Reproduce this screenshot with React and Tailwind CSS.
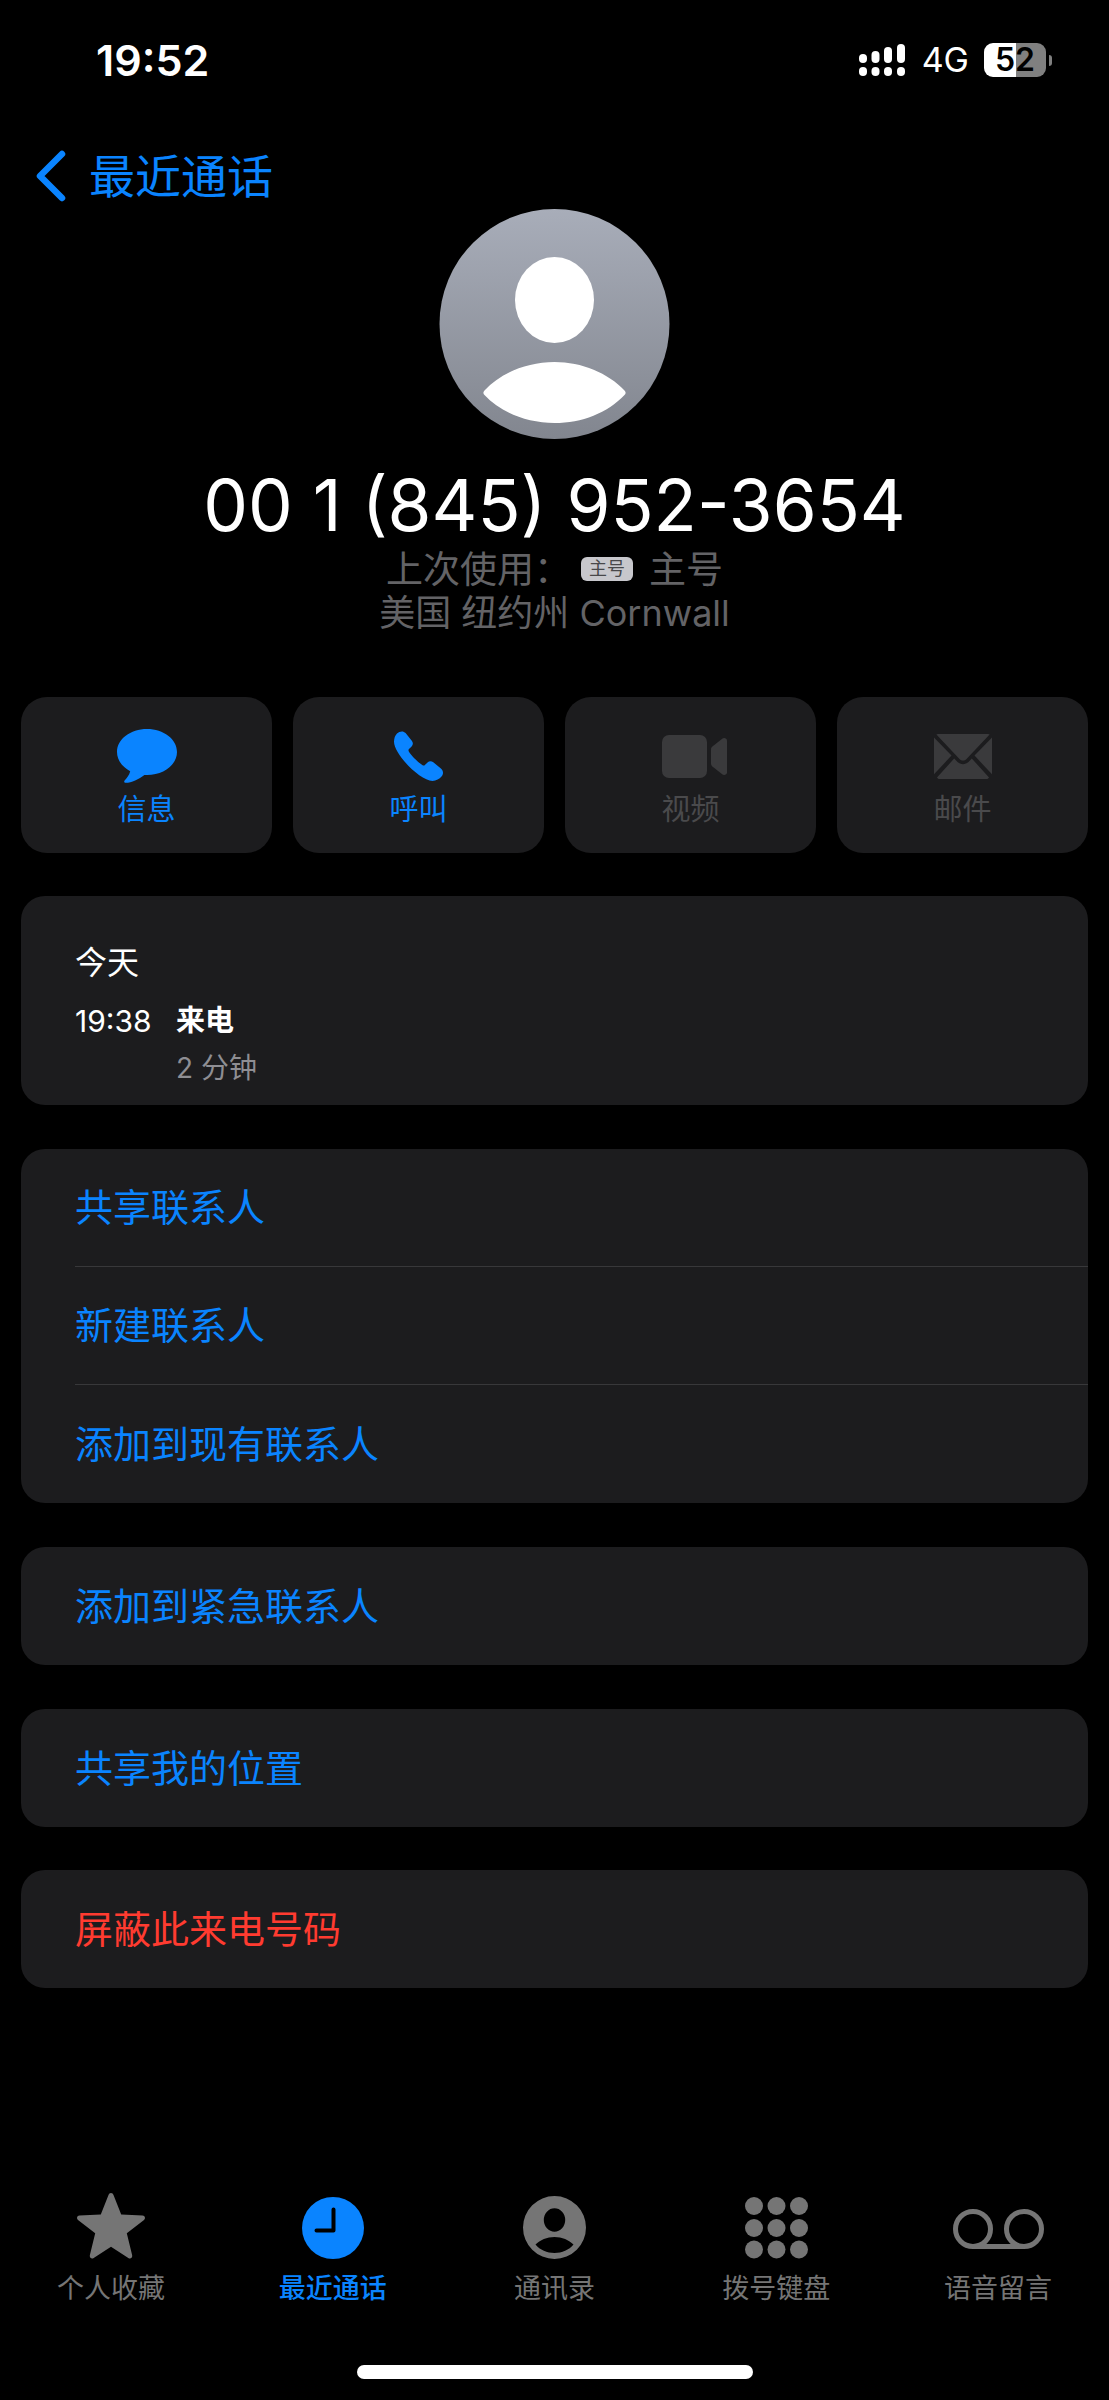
const font = { fontFamily: 'Inter, "Noto Sans CJK SC", sans-serif' };

function Bubble() {
  return (
    <svg width="60" height="54" viewBox="0 0 60 54" fill="#0a84ff">
      <path d="M30 0C13.400 0 0 10.200 0 23c0 8 5.200 15 13.200 19.200-.9 3.600-3.200 7-5.600 9.200-.9.900-.3 2.500 1.200 2.400 5.600-.4 13.200-3.400 18.600-7.900 1 .1 1.600.1 2.600.1 16.600 0 30-10.200 30-23S46.600 0 30 0z" />
    </svg>
  );
}

function Phone() {
  return (
    <svg width="50" height="50" viewBox="0 0 50 50" fill="#0a84ff">
      <path d="M3 2.500C5.500.200 9.300-.500 11.600 2.100l6.200 7.600c1.500 1.900 1.400 4.100-.2 5.800l-2.600 2.600c-.6.600-.7 1.500-.2 2.300 2.500 4 9.300 11 13.800 13.800.8.500 1.700.4 2.300-.2l2.600-2.600c1.700-1.600 3.900-1.700 5.800-.2l7.600 6.200c2.600 2.300 2.800 5.500.6 8.200-2 2.500-5.300 4.300-9 4.300C26 49.900 0 23 0 10.800 0 7.500 1 4.400 3 2.500z" />
    </svg>
  );
}

function Video() {
  return (
    <svg className="ml-[7px]" width="65" height="43" viewBox="0 0 65 43" fill="#3a3a3c">
      <rect x="0" y="0" width="45" height="43" rx="7" />
      <path d="M49 14.500c0-1.200.4-2 1.400-2.900l9.800-7.900c1.700-1.300 4.800-.5 4.800 2v31.600c0 2.500-3.100 3.300-4.800 2l-9.800-7.900c-1-.9-1.400-1.700-1.400-2.900z" />
    </svg>
  );
}

function Mail() {
  return (
    <svg width="58" height="45" viewBox="0 0 58 45" fill="#3a3a3c">
      <path d="M4 0h50c.8 0 1.300.2 1.600.5L32.500 25c-2 2-5 2-7 0L2.400.5C2.700.2 3.200 0 4 0z" />
      <path d="M0 3.500v36.800L17.500 21.600z" />
      <path d="M58 3.500v36.800L40.500 21.600z" />
      <path d="M3 43.500 20.200 24.500l3.300 3.400c3 3 8 3 11 0l3.300-3.400L55 43.500c-.4.900-1.200 1.500-2.500 1.500h-47c-1.300 0-2.100-.6-2.500-1.500z" />
    </svg>
  );
}

function Star() {
  return (
    <svg width="68" height="66" viewBox="0 0 68 66" fill="#757575">
      <path d="M34 0c1.300 0 2 .8 2.600 2.200l7.600 19.300 21.300 1.100c2.500.2 3.300 2.700 1.500 4.300L49.800 40.300l5.300 21.800c.6 2.600-1.600 4.200-3.800 2.800L34 53.800 16.700 64.900c-2.200 1.400-4.400-.2-3.800-2.800l5.300-21.800L1 26.900c-1.800-1.600-1-4.100 1.500-4.300l21.300-1.100 7.600-19.300C32 .8 32.700 0 34 0z" />
    </svg>
  );
}

function Clock() {
  return (
    <svg width="62" height="62" viewBox="0 0 62 62">
      <circle cx="31" cy="31" r="31" fill="#0a84ff" />
      <path d="M31.500 12.500V33.500H14.500" fill="none" stroke="#000" strokeWidth="4" strokeLinecap="round" strokeLinejoin="round" />
    </svg>
  );
}

function Contact() {
  return (
    <svg width="63" height="63" viewBox="0 0 63 63" fill="#757575">
      <path fillRule="evenodd" d="M31.500 0a31.500 31.500 0 1 1 0 63 31.500 31.500 0 0 1 0-63zM31.500 12.300a10.700 11.700 0 1 0 0 23.400 10.700 11.700 0 0 0 0-23.400zM31.500 41c-7.500 0-14.500 3-19 7.500 4.500 5.500 11.500 8.500 19 8.500s14.500-3 19-8.500c-4.500-4.500-11.500-7.500-19-7.500z" />
    </svg>
  );
}

function Keypad() {
  const dots = [9, 31.5, 54];
  const rows = [9, 31, 52.5];
  return (
    <svg width="63" height="62" viewBox="0 0 63 62" fill="#757575">
      {rows.map((y) => dots.map((x) => <circle key={`${x}-${y}`} cx={x} cy={y} r="9" />))}
    </svg>
  );
}

function Voicemail() {
  return (
    <svg className="mb-[10px]" width="91" height="40" viewBox="0 0 91 40" fill="none" stroke="#757575" strokeWidth="5">
      <circle cx="20" cy="20" r="17.500" />
      <circle cx="71" cy="20" r="17.500" />
      <path d="M20 37.500h51" />
    </svg>
  );
}

function ActionButton({ icon, label, active }) {
  return (
    <div className="flex h-[156px] flex-col items-center rounded-[26px] bg-[#1c1c1e]">
      <div className="mt-[28px] flex h-[62px] items-center justify-center">{icon}</div>
      <span className={`mt-[4px] text-[29px] leading-[38px] ${active ? 'text-[#0a84ff]' : 'text-[#4a4a4c]'}`}>{label}</span>
    </div>
  );
}

function Row({ children, red, divider }) {
  return (
    <div className="pl-[54px]">
      <div className={`flex h-[118px] items-center text-[38px] ${red ? 'text-[#ff3b30]' : 'text-[#0a84ff]'} ${divider ? 'border-b border-[#38383a]' : ''}`}>
        {children}
      </div>
    </div>
  );
}

function Card({ children, className = '' }) {
  return <div className={`mx-[21px] overflow-hidden rounded-[24px] bg-[#1c1c1e] ${className}`}>{children}</div>;
}

function Tab({ icon, label, active }) {
  return (
    <div className="flex flex-col items-center">
      <div className="flex h-[66px] items-end">{icon}</div>
      <span className={`mt-[12px] text-[27px] leading-[36px] ${active ? 'font-medium text-[#0a84ff]' : 'text-[#757575]'}`}>{label}</span>
    </div>
  );
}

export default function App() {
  return (
    <div className="flex h-[2400px] w-[1109px] flex-col bg-black text-white" style={font}>
      {/* Status bar */}
      <div className="flex h-[120px] items-center justify-between pl-[96px] pr-[57px]">
        <span className="text-[43px] font-semibold leading-none">19:52</span>
        <div className="flex items-center">
          <svg width="46" height="32" viewBox="0 0 46 32" fill="#fff">
            <rect x="0" y="10" width="8" height="9" rx="4" />
            <rect x="12.500" y="7" width="8" height="12" rx="4" />
            <rect x="25" y="3" width="8" height="16" rx="4" />
            <rect x="38" y="0" width="8" height="19" rx="4" />
            <rect x="0" y="23" width="8" height="9" rx="4" />
            <rect x="12.500" y="23" width="8" height="9" rx="4" />
            <rect x="25" y="23" width="8" height="9" rx="4" />
            <rect x="38" y="23" width="8" height="9" rx="4" />
          </svg>
          <span className="ml-[17px] text-[34px] leading-none">4G</span>
          <div className="ml-[15px] flex h-[34px] w-[62px] items-center justify-center rounded-[9px] bg-[linear-gradient(90deg,#fff_0%,#fff_52%,#808080_52%,#808080_100%)] text-[32px] font-semibold leading-none text-black">
            52
          </div>
          <div className="ml-[3px] h-[11px] w-[3px] rounded-r-full bg-[#808080]" />
        </div>
      </div>

      {/* Back link */}
      <div className="mt-[26px] flex h-[60px] items-center pl-[35px] text-[#0a84ff]">
        <svg width="32" height="52" viewBox="0 0 32 52" fill="none" stroke="currentColor" strokeWidth="6.500" strokeLinecap="round" strokeLinejoin="round">
          <path d="M27 4 5 26l22 22" />
        </svg>
        <span className="ml-[22px] text-[46px] leading-none">最近通话</span>
      </div>

      {/* Contact header */}
      <div className="mt-[3px] flex flex-col items-center">
        <svg width="231" height="230" viewBox="0 0 231 230">
          <defs>
            <linearGradient id="avatarFill" x1="0" y1="0" x2="0" y2="1">
              <stop offset="0" stopColor="#a8adb9" />
              <stop offset="1" stopColor="#82868f" />
            </linearGradient>
          </defs>
          <circle cx="115.500" cy="115" r="115" fill="url(#avatarFill)" />
          <ellipse cx="115.500" cy="91" rx="39.500" ry="43" fill="#fff" />
          <path d="M45.500 186c-1.500-1.500-1.500-3 0-4.500C62 164 88 153 115.500 153s53.500 11 70 28.500c1.500 1.500 1.500 3 0 4.500-17 18-42.500 28-70 28s-53-10-70-28z" fill="#fff" />
        </svg>
        <div className="mt-[26px] text-[71px] leading-[80px]">00 1 (845) 952-3654</div>
        <div className="mt-[2px] flex h-[44px] items-center text-[37px] leading-none text-[#636366]">
          <span>上次使用：</span>
          <span className="ml-[10px] mr-[16px] flex h-[24px] w-[52px] items-center justify-center rounded-[6px] bg-[#c7c7cc] text-[18px] leading-none text-[#48484a]">主号</span>
          <span>主号</span>
        </div>
        <div className="flex h-[44px] items-center text-[36px] leading-none text-[#636366]">美国 纽约州 Cornwall</div>
      </div>

      {/* Action buttons */}
      <div className="mx-[21px] mt-[62px] grid grid-cols-4 gap-[21px]">
        <ActionButton active icon={<Bubble />} label="信息" />
        <ActionButton active icon={<Phone />} label="呼叫" />
        <ActionButton icon={<Video />} label="视频" />
        <ActionButton icon={<Mail />} label="邮件" />
      </div>

      {/* Recent call */}
      <Card className="mt-[43px] h-[209px] pl-[54px] pt-[46px]">
        <div className="text-[32px] leading-[42px]">今天</div>
        <div className="mt-[16px] flex h-[42px] items-center">
          <span className="w-[101px] text-[30px]">19:38</span>
          <span className="text-[29px] font-semibold">来电</span>
        </div>
        <div className="ml-[101px] mt-[5px] text-[28px] leading-[42px] text-[#8e8e93]">2 分钟</div>
      </Card>

      <Card className="mt-[44px]">
        <Row divider>共享联系人</Row>
        <Row divider>新建联系人</Row>
        <Row>添加到现有联系人</Row>
      </Card>
      <Card className="mt-[44px]"><Row>添加到紧急联系人</Row></Card>
      <Card className="mt-[44px]"><Row>共享我的位置</Row></Card>
      <Card className="mt-[43px]"><Row red>屏蔽此来电号码</Row></Card>

      {/* Tab bar */}
      <div className="mt-auto">
        <div className="grid grid-cols-5">
          <Tab icon={<Star />} label="个人收藏" />
          <Tab active icon={<Clock />} label="最近通话" />
          <Tab icon={<Contact />} label="通讯录" />
          <Tab icon={<Keypad />} label="拨号键盘" />
          <Tab icon={<Voicemail />} label="语音留言" />
        </div>
        <div className="mx-auto mb-[21px] mt-[58px] h-[14px] w-[396px] rounded-full bg-white" />
      </div>
    </div>
  );
}
